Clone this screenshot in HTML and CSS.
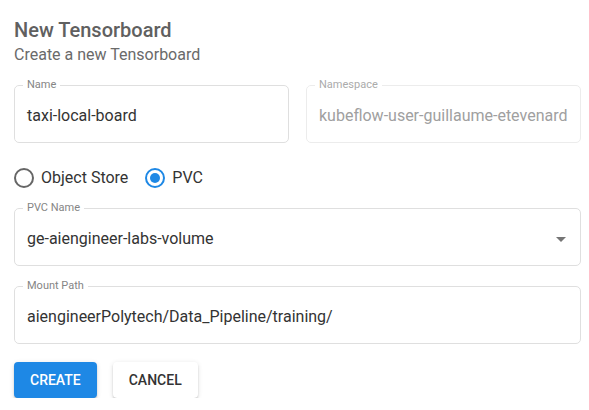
FILE: index.html
```html
<!DOCTYPE html>
<html lang="en">
<head>
<meta charset="utf-8">
<title>New Tensorboard</title>
<link rel="stylesheet" href="styles.css">
</head>
<body>
<main class="dialog">
  <h1 class="title">New Tensorboard</h1>
  <p class="subtitle">Create a new Tensorboard</p>

  <div class="row">
    <fieldset class="field">
      <legend class="field-label">Name</legend>
      <div class="field-value">taxi-local-board</div>
    </fieldset>
    <fieldset class="field field-disabled">
      <legend class="field-label">Namespace</legend>
      <div class="field-value">kubeflow-user-guillaume-etevenard</div>
    </fieldset>
  </div>

  <div class="radios">
    <label class="radio">
      <span class="radio-circle"></span>
      <span class="radio-text">Object Store</span>
    </label>
    <label class="radio radio-checked">
      <span class="radio-circle"><span class="radio-dot"></span></span>
      <span class="radio-text">PVC</span>
    </label>
  </div>

  <fieldset class="field field-select">
    <legend class="field-label">PVC Name</legend>
    <div class="field-value">
      <span>ge-aiengineer-labs-volume</span>
      <span class="select-arrow"></span>
    </div>
  </fieldset>

  <fieldset class="field field-mount">
    <legend class="field-label">Mount Path</legend>
    <div class="field-value">aiengineerPolytech/Data_Pipeline/training/</div>
  </fieldset>

  <div class="actions">
    <button class="btn btn-primary">CREATE</button>
    <button class="btn btn-default">CANCEL</button>
  </div>
</main>
</body>
</html>
```

FILE: styles.css
```css
* { box-sizing: border-box; }

html, body {
  margin: 0;
  padding: 0;
  background: #ffffff;
}

body {
  font-family: Roboto, "Liberation Sans", Arial, sans-serif;
  color: #333333;
}

.dialog {
  padding: 18px 8px 0 14px;
  width: 589px;
}

.title {
  margin: 0;
  font-size: 20px;
  line-height: 24px;
  font-weight: 500;
  color: #606060;
}

.subtitle {
  margin: 3px 0 0 0;
  font-size: 16px;
  line-height: 20px;
  font-weight: 400;
  color: #6a6a6a;
}

.row {
  display: flex;
  gap: 17px;
  margin-top: 14px;
}

.row .field {
  flex: 1 1 0;
  min-width: 0;
}

.field {
  margin: 0;
  padding: 0 12px;
  border: 1px solid #dfdfdf;
  border-radius: 5px;
  min-width: 0;
}

.field-label {
  margin-left: -4px;
  padding: 0 4px;
  font-size: 11px;
  line-height: 12px;
  color: #858585;
}

.field-value {
  padding: 15px 0 16px 0;
  font-size: 16px;
  line-height: 20px;
  color: #333333;
  white-space: nowrap;
}

.field-disabled {
  border-color: #ececec;
}

.field-disabled .field-label {
  color: #ababab;
}

.field-disabled .field-value {
  color: #a0a0a0;
}

.radios {
  display: flex;
  align-items: center;
  gap: 17px;
  margin-top: 25px;
}

.radio {
  display: flex;
  align-items: center;
  gap: 7px;
  font-size: 16px;
  line-height: 20px;
  color: #333333;
}

.radio-circle {
  width: 20px;
  height: 20px;
  border: 2px solid #666666;
  border-radius: 50%;
  display: flex;
  align-items: center;
  justify-content: center;
}

.radio-checked .radio-circle {
  border-color: #1e88e5;
}

.radio-dot {
  width: 10px;
  height: 10px;
  border-radius: 50%;
  background: #1e88e5;
}

.field-select {
  margin-top: 14px;
}

.field-select .field-value {
  display: flex;
  align-items: center;
  justify-content: space-between;
  padding-right: 2px;
}

.select-arrow {
  width: 0;
  height: 0;
  border-left: 5px solid transparent;
  border-right: 5px solid transparent;
  border-top: 5px solid #757575;
}

.field-mount {
  margin-top: 14px;
}

.actions {
  display: flex;
  gap: 16px;
  margin-top: 18px;
}

.btn {
  height: 36px;
  padding: 0 16px;
  border: none;
  border-radius: 4px;
  font-family: Roboto, "Liberation Sans", Arial, sans-serif;
  font-size: 14px;
  font-weight: 500;
  letter-spacing: 0;
  box-shadow: 0 3px 1px -2px rgba(0,0,0,.2), 0 2px 2px 0 rgba(0,0,0,.14), 0 1px 5px 0 rgba(0,0,0,.12);
}

.btn-primary {
  background: #1e88e5;
  color: #ffffff;
}

.btn-default {
  background: #ffffff;
  color: #333333;
}
```
